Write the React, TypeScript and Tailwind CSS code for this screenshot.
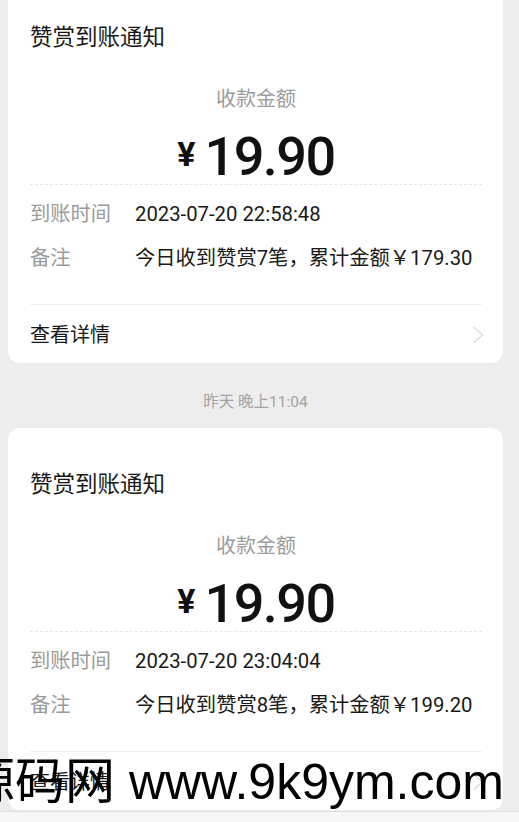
type Notice = {
  amount: string;
  time: string;
  count: number;
  total: string;
};

const notices: Notice[] = [
  { amount: '19.90', time: '2023-07-20 22:58:48', count: 7, total: '179.30' },
  { amount: '19.90', time: '2023-07-20 23:04:04', count: 8, total: '199.20' },
];

function Chevron() {
  return (
    <svg width="12" height="18" viewBox="0 0 12 18" fill="none" className="mr-[-2px]">
      <polyline points="1.5,1 10.5,9 1.5,17" stroke="#dcdcdc" strokeWidth="1.4" strokeLinejoin="round" />
    </svg>
  );
}

function NoticeCard({ n }: { n: Notice }) {
  return (
    <div className="bg-white rounded-[12px] pl-[22px] pr-[21px] pt-[42px] pb-[14px]">
      <div className="text-[22.5px] leading-[28px] text-[#191919]">赞赏到账通知</div>

      {/* amount */}
      <div className="mt-[34px] text-center text-[20px] leading-[28px] text-[#9b9b9b]">收款金额</div>
      <div className="mt-[16px] flex justify-center border-b border-dashed border-[#e6e6e6]">
        <span className="mt-[8px] mr-[9px] text-[34px] leading-[34px] font-bold text-[#111]">¥</span>
        <span className="text-[54px] leading-[55px] font-medium text-[#111] tracking-[-1.5px]">{n.amount}</span>
      </div>

      {/* detail rows */}
      <div className="mt-[16px] flex flex-col gap-[18px] text-[20.3px] leading-[26px]">
        <div className="flex">
          <span className="w-[105px] shrink-0 text-[#9b9b9b]">到账时间</span>
          <span className="text-[#191919]">{n.time}</span>
        </div>
        <div className="flex">
          <span className="w-[105px] shrink-0 text-[#9b9b9b]">备注</span>
          <span className="text-[#191919]">
            今日收到赞赏{n.count}笔，累计金额￥{n.total}
          </span>
        </div>
      </div>

      <div className="mt-[33px] border-t border-[#f0f0f0] pt-[16px] flex items-center justify-between">
        <span className="text-[20px] leading-[28px] text-[#191919]">查看详情</span>
        <Chevron />
      </div>
    </div>
  );
}

export default function App() {
  return (
    <div
      className="relative h-[822px] w-[519px] overflow-hidden bg-[#ededed] flex flex-col"
      style={{ fontFamily: 'Roboto, "Noto Sans CJK SC", sans-serif' }}
    >
      <div className="flex-1 overflow-hidden pl-[8px] pr-[16px]">
        <div className="-mt-[19px]">
          <NoticeCard n={notices[0]} />
          <div className="mt-[29px] mb-[16px] text-center text-[15.5px] leading-[20px] text-[#a3a3a3]">
            昨天 晚上11:04
          </div>
          <NoticeCard n={notices[1]} />
        </div>
      </div>
      <div className="h-[11px] bg-[#f7f7f7] border-t border-[#e2e2e2]" />

      {/* watermark */}
      <div
        className="absolute left-[-35px] top-[757px] whitespace-nowrap text-[50px] leading-[50px] text-black"
        style={{ fontFamily: '"Liberation Sans", "Noto Sans CJK SC", sans-serif' }}
      >
        源码网 www.9k9ym.com
      </div>
    </div>
  );
}
